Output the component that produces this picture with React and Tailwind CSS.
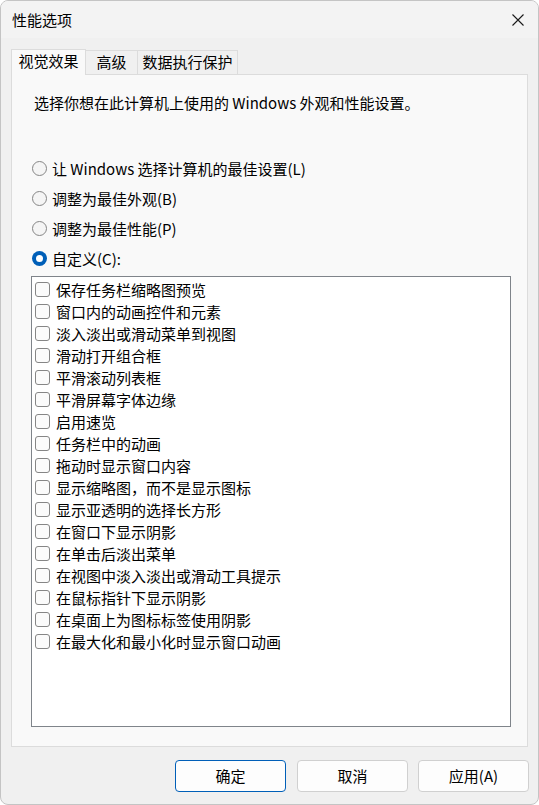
import React, { useState } from 'react';

const effects = [
  '保存任务栏缩略图预览',
  '窗口内的动画控件和元素',
  '淡入淡出或滑动菜单到视图',
  '滑动打开组合框',
  '平滑滚动列表框',
  '平滑屏幕字体边缘',
  '启用速览',
  '任务栏中的动画',
  '拖动时显示窗口内容',
  '显示缩略图，而不是显示图标',
  '显示亚透明的选择长方形',
  '在窗口下显示阴影',
  '在单击后淡出菜单',
  '在视图中淡入淡出或滑动工具提示',
  '在鼠标指针下显示阴影',
  '在桌面上为图标标签使用阴影',
  '在最大化和最小化时显示窗口动画',
];

const modes = [
  { key: 'L', label: '让 Windows 选择计算机的最佳设置(L)' },
  { key: 'B', label: '调整为最佳外观(B)' },
  { key: 'P', label: '调整为最佳性能(P)' },
  { key: 'C', label: '自定义(C):' },
];

function Radio({ checked }) {
  return checked ? (
    <span className="w-[15px] h-[15px] rounded-full bg-[#005fb8] flex items-center justify-center shrink-0">
      <span className="w-[7px] h-[7px] rounded-full bg-white" />
    </span>
  ) : (
    <span className="w-[15px] h-[15px] rounded-full border border-[#868686] bg-[#f5f5f5] shrink-0" />
  );
}

export default function App() {
  const [mode, setMode] = useState('C');
  const [checked, setChecked] = useState({});

  return (
    <div
      className="w-[539px] h-[805px] bg-[#f0f0f0] border border-[#c4c4c4] rounded-[8px] overflow-hidden flex flex-col text-[15px] text-black"
      style={{ fontFamily: '"Noto Sans CJK SC", "Noto Sans", sans-serif' }}
    >
      {/* title bar */}
      <div className="h-[37px] bg-[#f3f3f3] flex items-center justify-between pl-[11px] pr-[13px] shrink-0">
        <span className="leading-none">性能选项</span>
        <svg width="14" height="14" viewBox="0 0 14 14" fill="none" stroke="#1a1a1a" strokeWidth="1.1">
          <path d="M1.5 1.5 L12.5 12.5 M12.5 1.5 L1.5 12.5" />
        </svg>
      </div>

      {/* tabs */}
      <div className="flex items-end pl-[10px] mt-[10px] h-[26px] shrink-0">
        <div className="h-[26px] w-[75px] bg-[#f9f9f9] border border-b-0 border-[#dcdcdc] flex items-center justify-center relative z-10 -mb-px pb-[2px]">
          视觉效果
        </div>
        <div className="h-[24px] w-[52px] bg-[#f0f0f0] border border-l-0 border-b-0 border-[#dcdcdc] flex items-center justify-center">
          高级
        </div>
        <div className="h-[24px] w-[100px] bg-[#f0f0f0] border border-l-0 border-b-0 border-[#dcdcdc] flex items-center justify-center">
          数据执行保护
        </div>
      </div>

      {/* panel */}
      <div className="ml-[10px] w-[517px] h-[673px] bg-[#f9f9f9] border border-[#dcdcdc] flex flex-col shrink-0">
        <p className="mt-[18px] ml-[22px] leading-[20px]">选择你想在此计算机上使用的 Windows 外观和性能设置。</p>

        <div className="mt-[40px] ml-[20px] flex flex-col">
          {modes.map((m) => (
            <label
              key={m.key}
              className="h-[30px] flex items-center gap-[5px] cursor-default"
              onClick={() => setMode(m.key)}
            >
              <Radio checked={mode === m.key} />
              <span className="leading-none">{m.label}</span>
            </label>
          ))}
        </div>

        <div className="mt-[3px] ml-[19px] w-[480px] h-[451px] bg-white border border-[#7f848a] pt-px">
          {effects.map((name, i) => (
            <div
              key={name}
              className="h-[22px] flex items-center pl-[3px] gap-[6px]"
              onClick={() => setChecked((c) => ({ ...c, [i]: !c[i] }))}
            >
              <span className="w-[15px] h-[15px] rounded-[3px] border border-[#868686] bg-[#fbfbfb] shrink-0 flex items-center justify-center">
                {checked[i] && (
                  <svg width="10" height="10" viewBox="0 0 10 10" fill="none" stroke="#1a1a1a" strokeWidth="1.3">
                    <path d="M1.5 5.2 L4 7.6 L8.6 2.4" />
                  </svg>
                )}
              </span>
              <span className="leading-none">{name}</span>
            </div>
          ))}
        </div>
      </div>

      {/* buttons */}
      <div className="flex justify-end pr-[9px] mt-[13px]">
        <button className="w-[111px] h-[32px] rounded-[4px] bg-[#fdfdfd] border border-[#005fb8] text-[15px]">确定</button>
        <button className="ml-[11px] w-[111px] h-[32px] rounded-[4px] bg-[#fdfdfd] border border-[#d0d0d0] text-[15px]">取消</button>
        <button className="ml-[10px] w-[111px] h-[32px] rounded-[4px] bg-[#fdfdfd] border border-[#d0d0d0] text-[15px]">应用(A)</button>
      </div>
    </div>
  );
}
